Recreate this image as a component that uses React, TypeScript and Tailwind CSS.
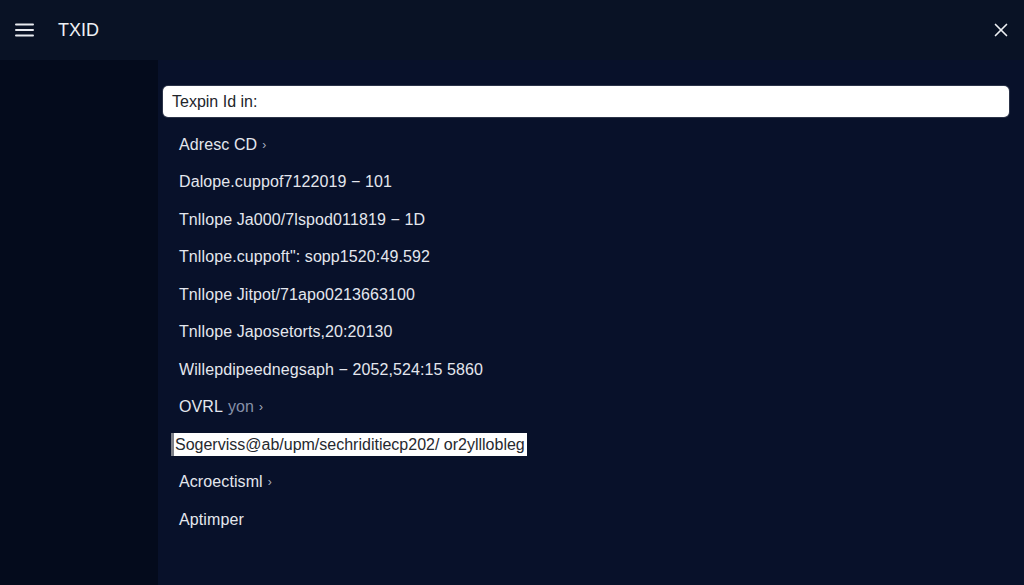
import { X } from 'lucide-react'

const rows: { text: string; muted?: string; chevron?: boolean; selected?: boolean }[] = [
  { text: 'Adresc CD', chevron: true },
  { text: 'Dalope.cuppof7122019 − 101' },
  { text: 'Tnllope Ja000/7lspod011819 − 1D' },
  { text: 'Tnllope.cuppoft": sopp1520:49.592' },
  { text: 'Tnllope Jitpot/71apo0213663100' },
  { text: 'Tnllope Japosetorts,20:20130' },
  { text: 'Willepdipeednegsaph − 2052,524:15 5860' },
  { text: 'OVRL', muted: 'yon', chevron: true },
  { text: 'Sogerviss@ab/upm/sechriditiecp202/ or2ylllobleg', selected: true },
  { text: 'Acroectisml', chevron: true },
  { text: 'Aptimper' },
]

export default function App() {
  return (
    <div className="w-[1024px] h-[585px] flex flex-col bg-[#07101f] text-[#e6e8ee] font-['Liberation_Sans',Arial,sans-serif] overflow-hidden">
      {/* Top bar */}
      <div className="h-[60px] shrink-0 flex items-center px-[15px] bg-[#091225]">
        <svg width="19" height="14" viewBox="0 0 19 14" className="shrink-0">
          <rect x="0" y="0.5" width="19" height="2" rx="1" fill="#e8eaf0" />
          <rect x="0" y="6" width="19" height="2" rx="1" fill="#e8eaf0" />
          <rect x="0" y="11.5" width="19" height="2" rx="1" fill="#e8eaf0" />
        </svg>
        <span className="ml-[24px] mt-[1px] text-[18px] text-[#eef0f4]">TXID</span>
        <button className="ml-auto mr-[-3px] text-[#eef0f4]">
          <X size={22} strokeWidth={1.8} />
        </button>
      </div>

      {/* Main */}
      <div className="flex-1 flex">
        <div className="w-[158px] shrink-0 bg-[#040b1c]" />
        <div className="flex-1 bg-[#08112a] pl-[5px] pr-[15px] pt-[26px]">
          <div className="h-[31px] rounded-[5px] bg-white flex items-center px-[9px] text-[16px] text-[#22252b] shadow-[0_0_0_1px_rgba(255,255,255,0.15)]">
            Texpin Id in:
          </div>
          <div className="mt-[9px] flex flex-col">
            {rows.map((r, i) => (
              <div key={i} className="h-[37.5px] flex items-center">
                {r.selected ? (
                  <span className="ml-[8px] h-[23px] flex items-center bg-white text-[#26292f] text-[16px] pl-[1px] pr-[2px] border-l-[3px] border-[#7d8088]">
                    {r.text}
                  </span>
                ) : (
                  <span className="ml-[16px] text-[16px] tracking-[0.1px] text-[#e4e7ee] flex items-center">
                    {r.text}
                    {r.muted && <span className="ml-[5px] text-[#8690a8]">{r.muted}</span>}
                    {r.chevron && <span className="ml-[5px] text-[12px] text-[#a9b0c0]">›</span>}
                  </span>
                )}
              </div>
            ))}
          </div>
        </div>
      </div>
    </div>
  )
}
